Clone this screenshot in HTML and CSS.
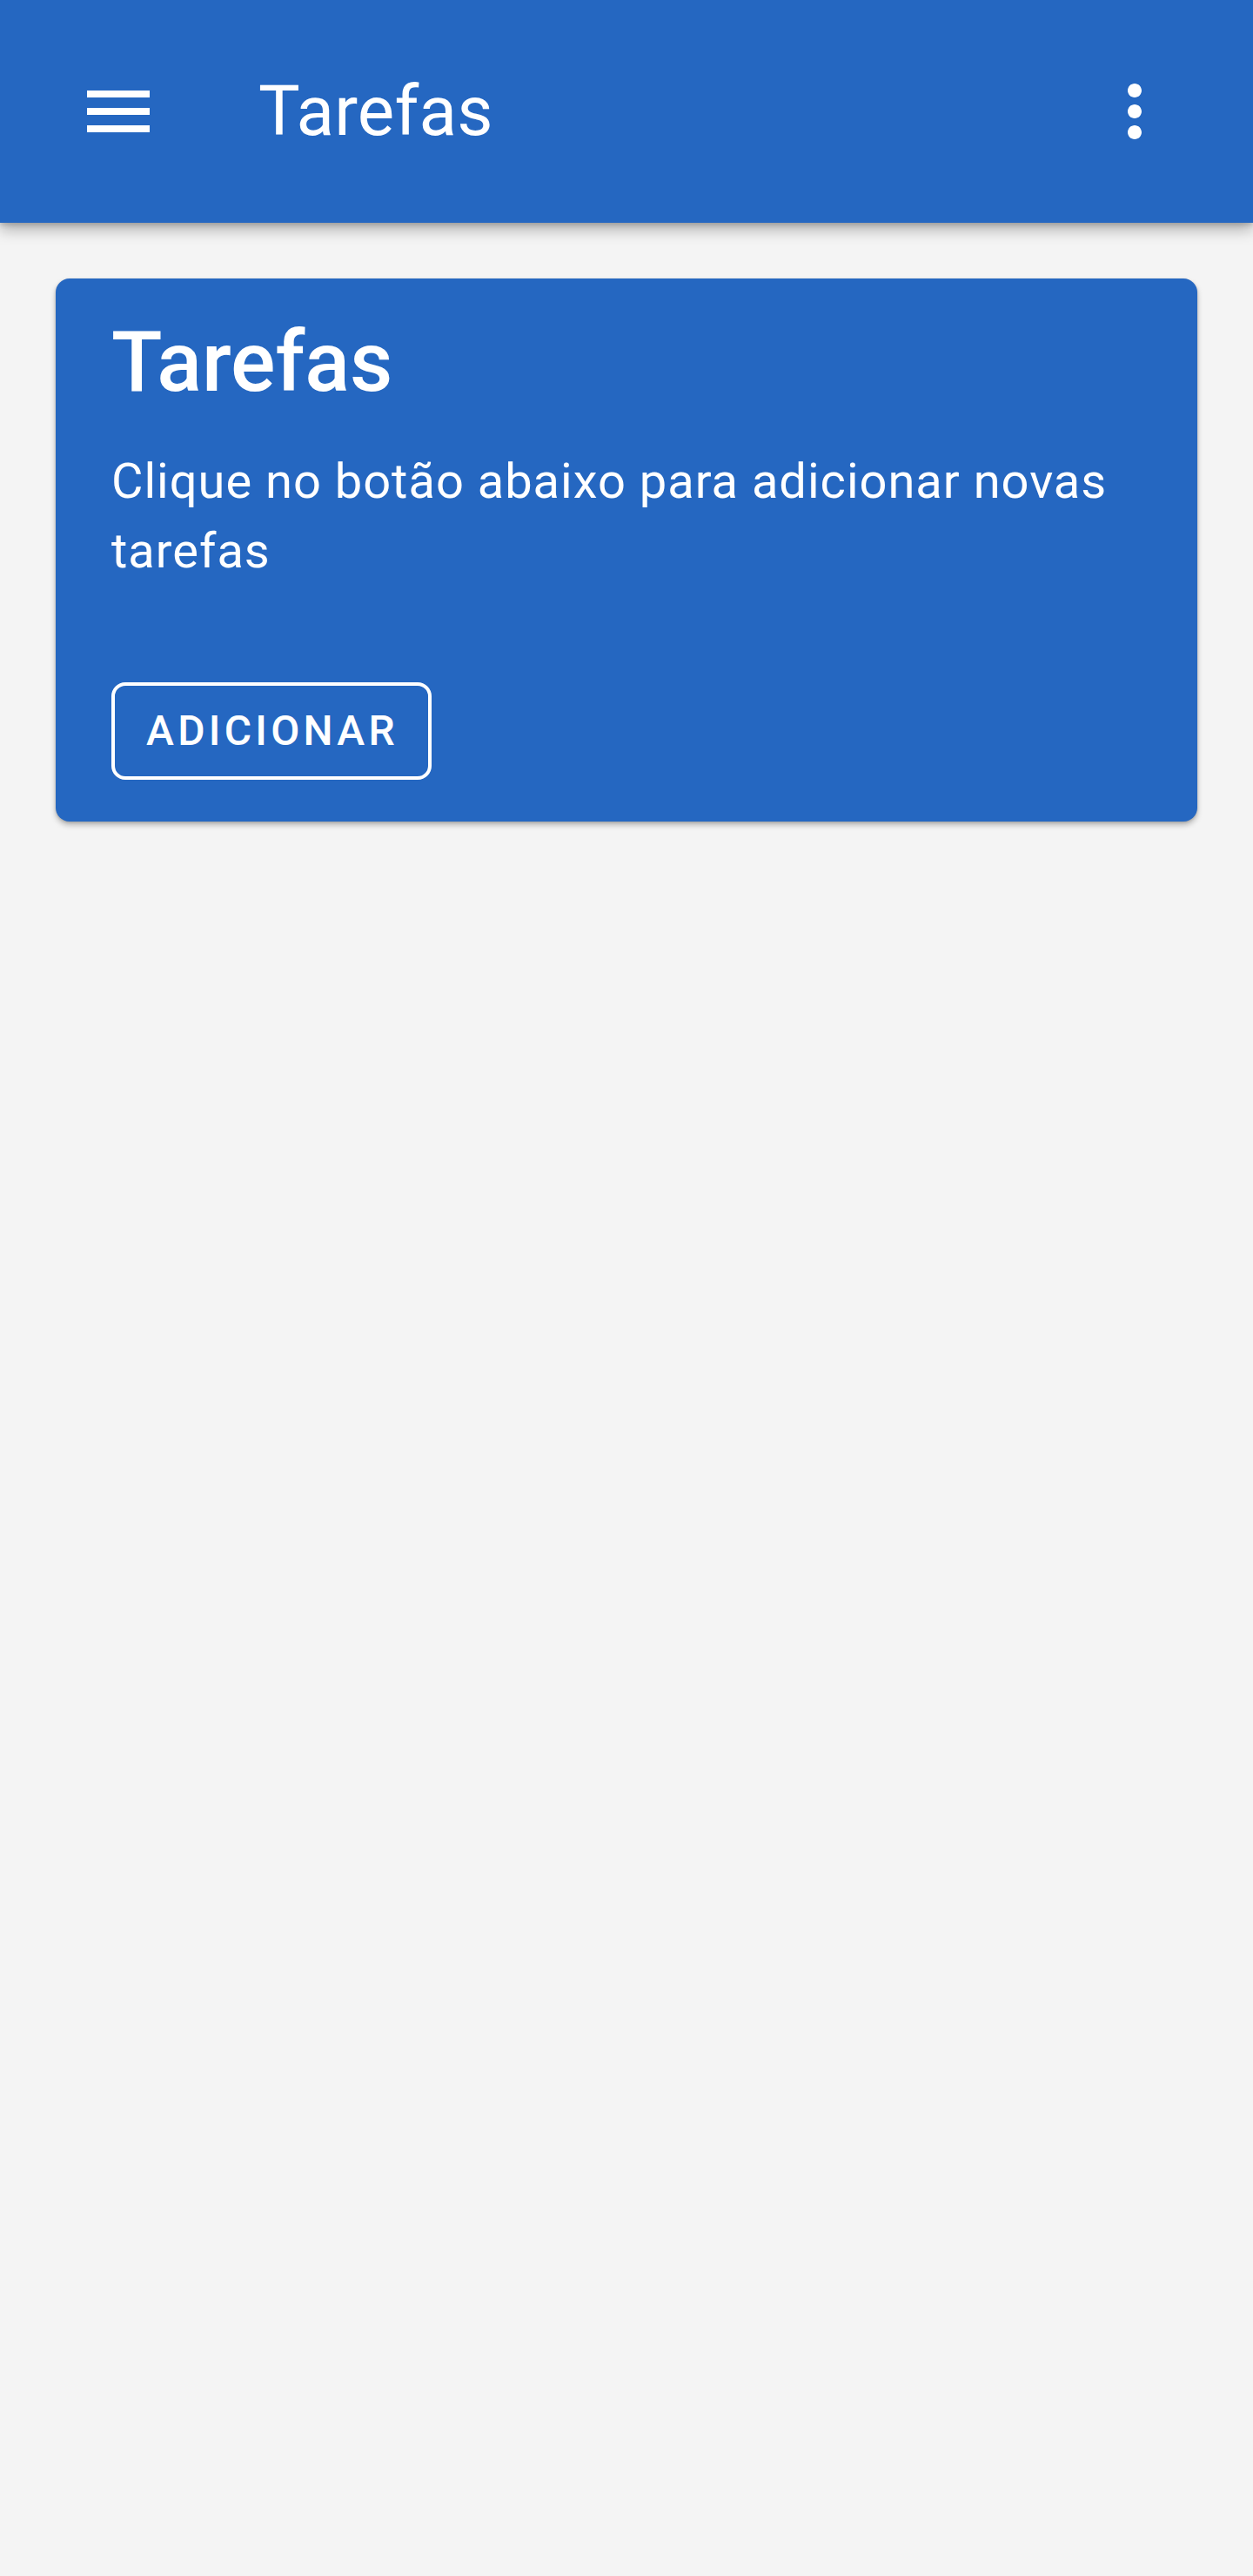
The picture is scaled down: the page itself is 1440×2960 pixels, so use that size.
FILE: index.html
```html
<!DOCTYPE html>
<html lang="pt">
<head>
<meta charset="utf-8">
<title>Tarefas</title>
<link rel="stylesheet" href="styles.css">
</head>
<body>
<header class="appbar">
  <button class="icon-btn" aria-label="Menu">
    <svg viewBox="0 0 24 24" width="96" height="96"><path fill="#fff" d="M3 18h18v-2H3v2zm0-5h18v-2H3v2zm0-7v2h18V6H3z"/></svg>
  </button>
  <h1 class="appbar-title">Tarefas</h1>
  <button class="icon-btn" aria-label="Mais opções">
    <svg viewBox="0 0 24 24" width="96" height="96"><path fill="#fff" d="M12 8c1.1 0 2-.9 2-2s-.9-2-2-2-2 .9-2 2 .9 2 2 2zm0 2c-1.1 0-2 .9-2 2s.9 2 2 2 2-.9 2-2-.9-2-2-2zm0 6c-1.1 0-2 .9-2 2s.9 2 2 2 2-.9 2-2-.9-2-2-2z"/></svg>
  </button>
</header>
<main class="content">
  <section class="card">
    <h2 class="card-title">Tarefas</h2>
    <p class="card-text">Clique no botão abaixo para adicionar novas tarefas</p>
    <div class="card-actions">
      <button class="outline-btn">ADICIONAR</button>
    </div>
  </section>
</main>
</body>
</html>
```
FILE: styles.css
```css
* { box-sizing: border-box; }
html, body {
  margin: 0;
  padding: 0;
  background: #f4f4f4;
  font-family: Roboto, "Noto Sans", sans-serif;
  color: #fff;
}
body { min-height: 2960px; }
.appbar {
  height: 256px;
  background: #2567c1;
  display: flex;
  align-items: center;
  padding: 0 88px;
  box-shadow: 0 8px 16px rgba(0,0,0,0.28), 0 2px 6px rgba(0,0,0,0.18);
  position: relative;
  z-index: 1;
}
.icon-btn {
  width: 96px;
  height: 96px;
  padding: 0;
  border: 0;
  background: none;
  display: flex;
}
.appbar-title {
  flex: 1;
  margin: 0 0 0 113px;
  font-size: 80px;
  font-weight: 400;
  line-height: 96px;
  letter-spacing: 0.2px;
}
.content {
  padding: 64px;
}
.card {
  background: #2567c1;
  border-radius: 16px;
  padding: 40px 64px 48px;
  box-shadow: 0 4px 6px rgba(0,0,0,0.25), 0 1px 3px rgba(0,0,0,0.15);
}
.card-title {
  margin: 0;
  font-size: 96px;
  font-weight: 500;
  line-height: 112px;
}
.card-text {
  margin: 41px 0 0;
  font-size: 56px;
  line-height: 80px;
  letter-spacing: 1px;
}
.card-actions {
  margin-top: 111px;
  display: flex;
}
.outline-btn {
  height: 112px;
  border: 4px solid #fff;
  border-radius: 16px;
  background: none;
  color: #fff;
  font-family: Roboto, "Noto Sans", sans-serif;
  font-size: 48px;
  font-weight: 500;
  letter-spacing: 4.3px;
  line-height: 104px;
  padding: 0 34px 0 36px;
}
```
